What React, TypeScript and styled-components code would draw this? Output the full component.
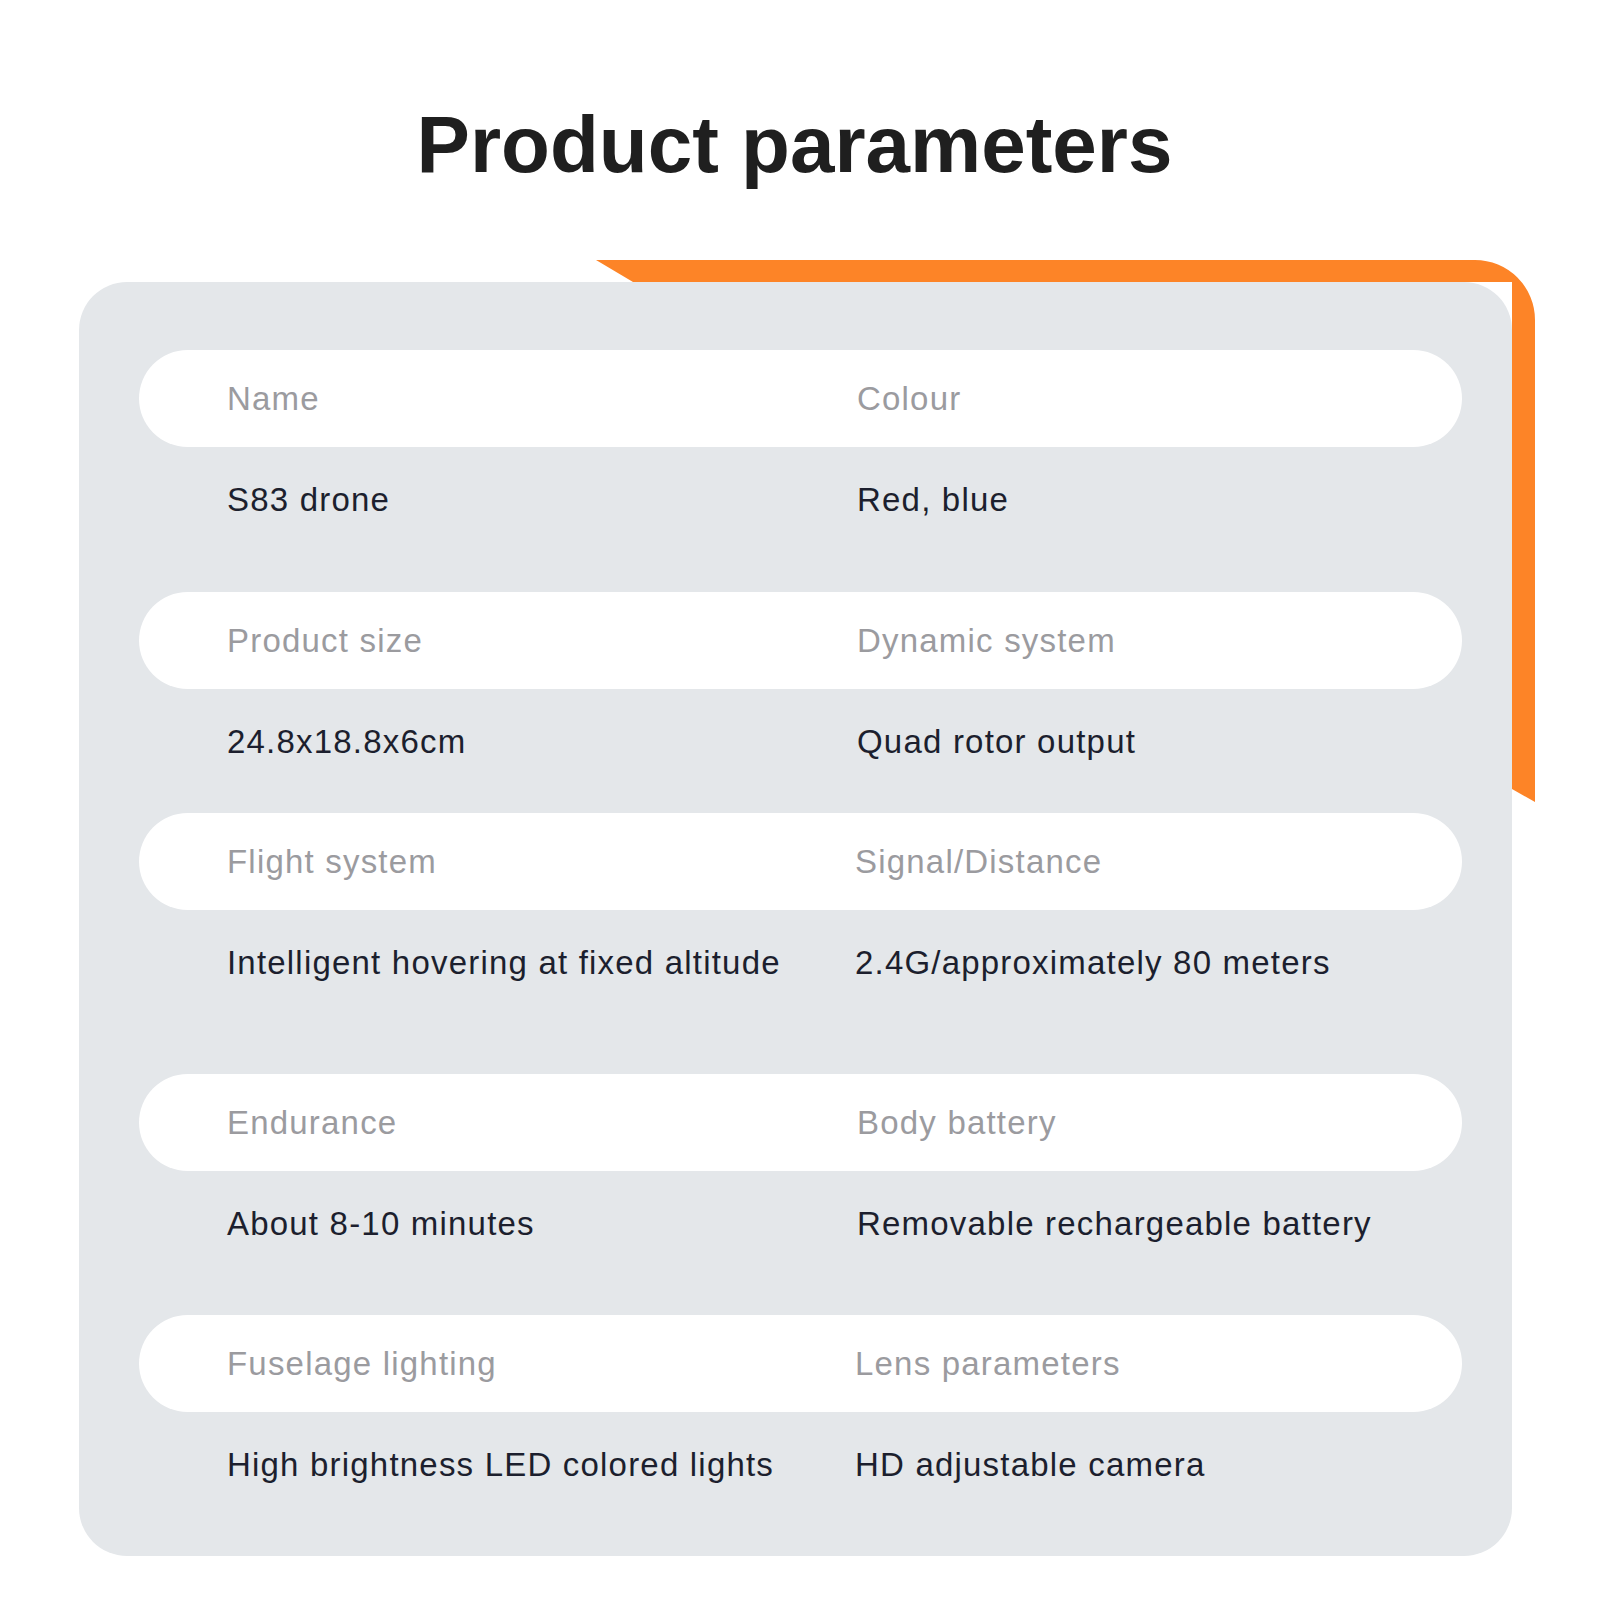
import styled, { createGlobalStyle } from "styled-components"

interface Param {
  label: [string, string];
  value: [string, string];
  gapAfter: number;
  nudge?: number; // right column sits a touch further left on some rows
}

const params: Param[] = [
  { label: ["Name", "Colour"], value: ["S83 drone", "Red, blue"], gapAfter: 43 },
  { label: ["Product size", "Dynamic system"], value: ["24.8x18.8x6cm", "Quad rotor output"], gapAfter: 22 },
  { label: ["Flight system", "Signal/Distance"], value: ["Intelligent hovering at fixed altitude", "2.4G/approximately 80 meters"], gapAfter: 62, nudge: -2 },
  { label: ["Endurance", "Body battery"], value: ["About 8-10 minutes", "Removable rechargeable battery"], gapAfter: 42 },
  { label: ["Fuselage lighting", "Lens parameters"], value: ["High brightness LED colored lights", "HD adjustable camera"], gapAfter: 0, nudge: -2 },
]

const GlobalStyle = createGlobalStyle`
  body {
    margin: 0;
    background: #ffffff;
    font-family: "Liberation Sans", Arial, sans-serif;
  }
`

const Page = styled.div`
  width: 1600px;
  height: 1600px;
  overflow: hidden;
  display: flex;
  flex-direction: column;
`

const Title = styled.h1`
  margin: 105px 0 0 0;
  padding-right: 11px;
  font-size: 80px;
  line-height: 80px;
  font-weight: 700;
  color: #1f1f1f;
  text-align: center;
`

const CardFrame = styled.div`
  position: relative;
  margin: 75px 0 0 79px;
  width: 1456px;
  padding-top: 22px;
  box-sizing: border-box;
`

// orange accent band behind the card's top right corner
const Accent = styled.svg`
  position: absolute;
  top: 0;
  left: 0;
  z-index: 0;
`

const Card = styled.div`
  position: relative;
  z-index: 1;
  width: 1433px;
  background: #e4e7ea;
  border-radius: 48px;
  padding: 68px 50px 42px 60px;
  box-sizing: border-box;
  display: flex;
  flex-direction: column;
`

const Row = styled.div<{ $pill?: boolean; $gapAfter?: number; $nudge?: number }>`
  display: grid;
  grid-template-columns: ${(p) => 630 + (p.$nudge ?? 0)}px 1fr;
  align-items: center;
  box-sizing: border-box;
  padding-left: 88px;
  padding-top: ${(p) => (p.$pill ? "1px" : "4px")};
  height: ${(p) => (p.$pill ? "97px" : "102px")};
  margin-bottom: ${(p) => p.$gapAfter ?? 0}px;
  background: ${(p) => (p.$pill ? "#ffffff" : "transparent")};
  border-radius: 48.5px;
`

const Cell = styled.span<{ $muted?: boolean }>`
  font-size: 33px;
  letter-spacing: 1.2px;
  line-height: 40px;
  white-space: nowrap;
  color: ${(p) => (p.$muted ? "#9b9b9f" : "#1c1f2e")};
`

export default function App() {
  return (
    <Page>
      <GlobalStyle />
      <Title>Product parameters</Title>
      <CardFrame>
        <Accent width="1456" height="545" viewBox="0 0 1456 545">
          <path
            d="M517 0 H1396 A60 60 0 0 1 1456 60 V542 L1433 529 V22 H554 Z"
            fill="#fd8427"
          />
        </Accent>
        <Card>
          {params.map((p) => (
            <div key={p.label[0]}>
              <Row $pill $nudge={p.nudge}>
                <Cell $muted>{p.label[0]}</Cell>
                <Cell $muted>{p.label[1]}</Cell>
              </Row>
              <Row $gapAfter={p.gapAfter} $nudge={p.nudge}>
                <Cell>{p.value[0]}</Cell>
                <Cell>{p.value[1]}</Cell>
              </Row>
            </div>
          ))}
        </Card>
      </CardFrame>
    </Page>
  );
}
